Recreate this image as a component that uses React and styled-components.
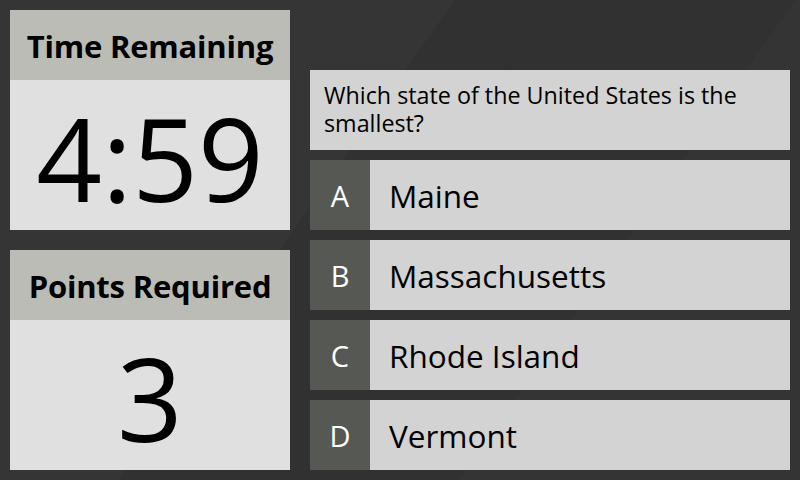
import React from "react";
import styled, { createGlobalStyle } from "styled-components";

const GlobalStyle = createGlobalStyle`
  html, body {
    margin: 0;
    padding: 0;
    width: 800px;
    height: 480px;
    overflow: hidden;
    background: #323232;
    font-family: "Open Sans", "DejaVu Sans", sans-serif;
  }
`;

const Screen = styled.div`
  width: 800px;
  height: 480px;
  box-sizing: border-box;
  padding: 10px;
  display: grid;
  grid-template-columns: 280px 480px;
  column-gap: 20px;
  background:
    linear-gradient(125deg, rgba(255,255,255,0.015) 0 40%, rgba(0,0,0,0.02) 40% 70%, rgba(255,255,255,0.01) 70%),
    #323232;
`;

const LeftColumn = styled.div`
  display: flex;
  flex-direction: column;
  gap: 20px;
`;

const Panel = styled.section`
  height: 220px;
  display: flex;
  flex-direction: column;
`;

const PanelHeader = styled.h2`
  margin: 0;
  height: 70px;
  background: #babcb5;
  color: #000;
  font-size: 31px;
  font-weight: 700;
  display: flex;
  align-items: center;
  justify-content: center;
  letter-spacing: -0.2px;
  padding-top: 1px;
  box-sizing: border-box;
`;

const PanelValue = styled.div`
  flex: 1;
  background: #e0e0e0;
  color: #000;
  font-size: 115px;
  font-weight: 400;
  display: flex;
  align-items: center;
  justify-content: center;
  line-height: 1;
  padding-top: 4px;
`;

const RightColumn = styled.div`
  display: flex;
  flex-direction: column;
  justify-content: flex-end;
  gap: 10px;
`;

const Question = styled.div`
  height: 80px;
  box-sizing: border-box;
  background: #d3d3d3;
  color: #000;
  font-size: 23.3px;
  line-height: 28px;
  padding: 11px 14px 0 14px;
`;

const Option = styled.div`
  height: 70px;
  display: flex;
  background: #d3d3d3;
`;

const Letter = styled.div`
  width: 60px;
  background: #565953;
  color: #fff;
  font-size: 29px;
  display: flex;
  align-items: center;
  justify-content: center;
`;

const Answer = styled.div`
  flex: 1;
  display: flex;
  align-items: center;
  padding-left: 19px;
  font-size: 31.5px;
  color: #000;
`;

const options = [
  { letter: "A", text: "Maine" },
  { letter: "B", text: "Massachusetts" },
  { letter: "C", text: "Rhode Island" },
  { letter: "D", text: "Vermont" },
];

export default function App() {
  return (
    <>
      <GlobalStyle />
      <Screen>
        <LeftColumn>
          <Panel>
            <PanelHeader>Time Remaining</PanelHeader>
            <PanelValue>4:59</PanelValue>
          </Panel>
          <Panel>
            <PanelHeader>Points Required</PanelHeader>
            <PanelValue>3</PanelValue>
          </Panel>
        </LeftColumn>
        <RightColumn>
          <Question>Which state of the United States is the smallest?</Question>
          {options.map((o) => (
            <Option key={o.letter}>
              <Letter>{o.letter}</Letter>
              <Answer>{o.text}</Answer>
            </Option>
          ))}
        </RightColumn>
      </Screen>
    </>
  );
}
